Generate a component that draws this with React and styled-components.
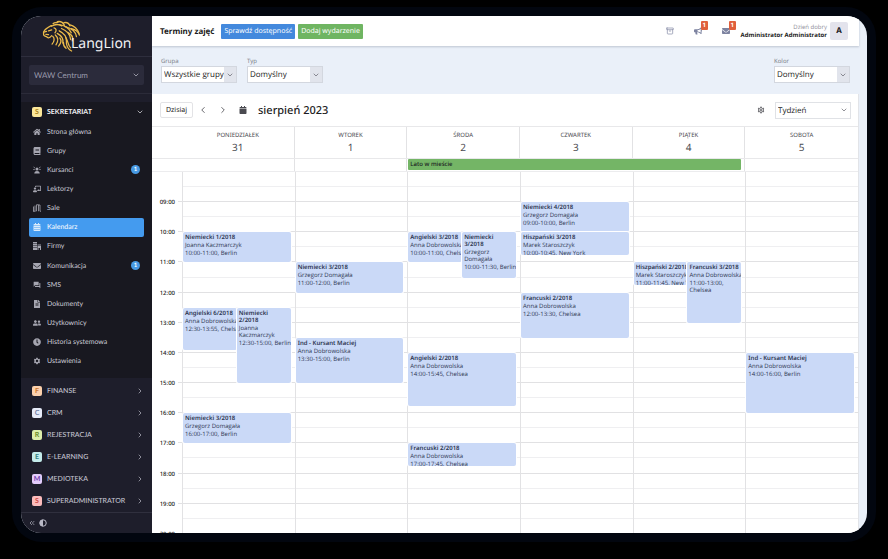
import React, { useState } from "react";
import styled, { createGlobalStyle, css } from "styled-components";
import {
  FaHome,
  FaBook,
  FaChalkboardTeacher,
  FaCalendarAlt,
  FaEnvelope,
  FaFileAlt,
  FaUserFriends,
  FaClock,
  FaBullhorn,
  FaCalendar,
} from "react-icons/fa";
import { MdForum, MdSettings, MdOutlineSettings } from "react-icons/md";
import { ImOffice } from "react-icons/im";
import {
  LuChevronDown,
  LuChevronLeft,
  LuChevronRight,
  LuChevronsLeft,
  LuArchive,
} from "react-icons/lu";

const DAY_START = 8 * 60;
const HALF_HOURS = 26;
const STEP = 5;

const menu = [
  { label: "Strona główna", icon: <FaHome /> },
  { label: "Grupy", icon: <FaBook /> },
  { label: "Kursanci", icon: <StudentIcon />, count: 1 },
  { label: "Lektorzy", icon: <FaChalkboardTeacher /> },
  { label: "Sale", icon: <RoomsIcon /> },
  { label: "Kalendarz", icon: <FaCalendarAlt /> },
  { label: "Firmy", icon: <ImOffice /> },
  { label: "Komunikacja", icon: <FaEnvelope />, count: 1 },
  { label: "SMS", icon: <MdForum /> },
  { label: "Dokumenty", icon: <FaFileAlt /> },
  { label: "Użytkownicy", icon: <FaUserFriends /> },
  { label: "Historia systemowa", icon: <FaClock /> },
  { label: "Ustawienia", icon: <MdSettings /> },
];

const sections = [
  { label: "FINANSE", bg: "#fbd0ac", color: "#c9752f" },
  { label: "CRM", bg: "#e6ebf8", color: "#7482a6" },
  { label: "REJESTRACJA", bg: "#dcedaa", color: "#6f8d2a" },
  { label: "E-LEARNING", bg: "#c3ebea", color: "#33807f" },
  { label: "MEDIOTEKA", bg: "#e3ccfa", color: "#7441ad" },
  { label: "SUPERADMINISTRATOR", bg: "#fbbcbc", color: "#cc4a4a" },
];

const days = [
  {
    name: "PONIEDZIAŁEK",
    number: 31,
    events: [
      { title: "Niemiecki 1/2018", person: "Joanna Kaczmarczyk", time: "10:00-11:00", place: "Berlin" },
      { title: "Angielski 6/2018", person: "Anna Dobrowolska", time: "12:30-13:55", place: "Chelsea", lane: 1 },
      { title: "Niemiecki 2/2018", person: "Joanna Kaczmarczyk", time: "12:30-15:00", place: "Berlin", lane: 2, wrapNames: true },
      { title: "Niemiecki 3/2018", person: "Grzegorz Domagała", time: "16:00-17:00", place: "Berlin" },
    ],
  },
  {
    name: "WTOREK",
    number: 1,
    events: [
      { title: "Niemiecki 3/2018", person: "Grzegorz Domagała", time: "11:00-12:00", place: "Berlin" },
      { title: "Ind - Kursant Maciej", person: "Anna Dobrowolska", time: "13:30-15:00", place: "Berlin" },
    ],
  },
  {
    name: "ŚRODA",
    number: 2,
    events: [
      { title: "Angielski 3/2018", person: "Anna Dobrowolska", time: "10:00-11:00", place: "Chelsea", lane: 1 },
      { title: "Niemiecki 3/2018", person: "Grzegorz Domagała", time: "10:00-11:30", place: "Berlin", lane: 2, wrapNames: true },
      { title: "Angielski 2/2018", person: "Anna Dobrowolska", time: "14:00-15:45", place: "Chelsea" },
      { title: "Francuski 2/2018", person: "Anna Dobrowolska", time: "17:00-17:45", place: "Chelsea" },
    ],
  },
  {
    name: "CZWARTEK",
    number: 3,
    events: [
      { title: "Niemiecki 4/2018", person: "Grzegorz Domagała", time: "09:00-10:00", place: "Berlin" },
      { title: "Hiszpański 3/2018", person: "Marek Staroszczyk", time: "10:00-10:45", place: "New York" },
      { title: "Francuski 2/2018", person: "Anna Dobrowolska", time: "12:00-13:30", place: "Chelsea" },
    ],
  },
  {
    name: "PIĄTEK",
    number: 4,
    events: [
      { title: "Hiszpański 2/2018", person: "Marek Staroszczyk", time: "11:00-11:45", place: "New York", lane: 1 },
      { title: "Francuski 3/2018", person: "Anna Dobrowolska", time: "11:00-13:00", place: "Chelsea", lane: 2, wrapTime: true },
    ],
  },
  {
    name: "SOBOTA",
    number: 5,
    events: [
      { title: "Ind - Kursant Maciej", person: "Anna Dobrowolska", time: "14:00-16:00", place: "Berlin" },
    ],
  },
];

const hours = Array.from({ length: 12 }, (_, i) => i + 9);

function toRow(clock) {
  const [h, m] = clock.split(":").map(Number);
  return (h * 60 + m - DAY_START) / STEP + 1;
}

export default function App() {
  const [active, setActive] = useState("Kalendarz");

  return (
    <Desk>
      <GlobalStyle />
      <Frame>
        <Screen>
          <Sidebar>
            <Brand href="#">
              <LionLogo />
              <BrandName>LangLion</BrandName>
            </Brand>
            <BranchBox>
              <SelectBox>
                <BranchSelect aria-label="Oddział">
                  <option>WAW Centrum</option>
                </BranchSelect>
                <SelectArrow $light>
                  <LuChevronDown />
                </SelectArrow>
              </SelectBox>
            </BranchBox>
            <OpenSection>
              <SectionButton $open>
                <Letter $bg="#fbe79a" $color="#a8821c">S</Letter>
                <SectionName>SEKRETARIAT</SectionName>
                <LuChevronDown />
              </SectionButton>
              <Menu>
                {menu.map(item => (
                  <MenuItem key={item.label}>
                    <MenuLink
                      href="#"
                      $active={item.label === active}
                      onClick={() => setActive(item.label)}
                    >
                      <MenuIcon>{item.icon}</MenuIcon>
                      <MenuText>{item.label}</MenuText>
                      {item.count && <Count>{item.count}</Count>}
                    </MenuLink>
                  </MenuItem>
                ))}
              </Menu>
            </OpenSection>
            <Sections>
              {sections.map(s => (
                <SectionButton key={s.label}>
                  <Letter $bg={s.bg} $color={s.color}>{s.label[0]}</Letter>
                  <SectionName>{s.label}</SectionName>
                  <LuChevronRight />
                </SectionButton>
              ))}
            </Sections>
            <SidebarFooter>
              <FooterButton aria-label="Zwiń menu">
                <LuChevronsLeft />
              </FooterButton>
              <FooterButton aria-label="Kontrast">
                <ContrastIcon />
              </FooterButton>
            </SidebarFooter>
          </Sidebar>

          <Main>
            <TopBar>
              <PageTitle>Terminy zajęć</PageTitle>
              <ActionButton $color="#4389dd">Sprawdź dostępność</ActionButton>
              <ActionButton $color="#6fb562">Dodaj wydarzenie</ActionButton>
              <Spacer />
              <TopIcons>
                <TopIcon aria-label="Archiwum">
                  <LuArchive />
                </TopIcon>
                <TopIcon aria-label="Ogłoszenia">
                  <FaBullhorn />
                  <Alert>1</Alert>
                </TopIcon>
                <TopIcon aria-label="Wiadomości">
                  <FaEnvelope />
                  <Alert>1</Alert>
                </TopIcon>
              </TopIcons>
              <User>
                <Greeting>Dzień dobry</Greeting>
                <UserName>Administrator Administrator</UserName>
              </User>
              <Avatar>A</Avatar>
            </TopBar>

            <Filters>
              <Filter label="Grupa" value="Wszystkie grupy" />
              <Filter label="Typ" value="Domyślny" />
              <Spacer />
              <Filter label="Kolor" value="Domyślny" />
            </Filters>

            <Calendar>
              <Toolbar>
                <TodayButton>Dzisiaj</TodayButton>
                <ToolButton aria-label="Poprzedni tydzień">
                  <LuChevronLeft />
                </ToolButton>
                <ToolButton aria-label="Następny tydzień">
                  <LuChevronRight />
                </ToolButton>
                <ToolButton aria-label="Wybierz datę" $small>
                  <FaCalendar />
                </ToolButton>
                <Month>sierpień 2023</Month>
                <Spacer />
                <ToolButton aria-label="Ustawienia kalendarza" $small>
                  <MdOutlineSettings />
                </ToolButton>
                <SelectBox>
                  <ViewSelect aria-label="Widok">
                    <option>Tydzień</option>
                  </ViewSelect>
                  <SelectArrow>
                    <LuChevronDown />
                  </SelectArrow>
                </SelectBox>
              </Toolbar>

              <WeekRow>
                <AxisCell />
                {days.map(day => (
                  <DayHead key={day.name}>
                    <DayName>{day.name}</DayName>
                    <DayNumber>{day.number}</DayNumber>
                  </DayHead>
                ))}
              </WeekRow>

              <AllDayRow>
                <AllDayCell $span={2} />
                <AllDayCell />
                <AllDayCell $span={3}>
                  <AllDayEvent>Lato w mieście</AllDayEvent>
                </AllDayCell>
                <AllDayCell />
              </AllDayRow>

              <Week>
                {Array.from({ length: HALF_HOURS }, (_, i) => (
                  <Slot key={i} $row={i + 1} />
                ))}
                {hours.map(h => (
                  <Hour key={h} $row={(h - 8) * 2}>
                    {String(h).padStart(2, "0")}:00
                  </Hour>
                ))}
                {days.map((day, i) => (
                  <Day key={day.name} $column={i + 2}>
                    {day.events.map(event => (
                      <CalendarEvent key={event.title + event.time} event={event} />
                    ))}
                  </Day>
                ))}
              </Week>
            </Calendar>
          </Main>
        </Screen>
      </Frame>
    </Desk>
  );
}

function Filter({ label, value }) {
  return (
    <FilterLabel>
      {label}
      <SelectBox>
        <FilterSelect>
          <option>{value}</option>
        </FilterSelect>
        <SelectArrow $filled>
          <LuChevronDown />
        </SelectArrow>
      </SelectBox>
    </FilterLabel>
  );
}

function CalendarEvent({ event }) {
  const [from, to] = event.time.split("-");

  return (
    <EventBox
      $from={toRow(from)}
      $to={toRow(to)}
      $lane={event.lane}
      $narrow={event.wrapNames}
    >
      <EventTitle $wrap={event.wrapNames}>{event.title}</EventTitle>
      <EventText $wrap={event.wrapNames}>{event.person}</EventText>
      <EventText $wrap={event.wrapTime}>
        {event.time}, {event.place}
      </EventText>
    </EventBox>
  );
}

function LionLogo() {
  return (
    <Lion viewBox="120 58 126 98" aria-hidden="true">
      <g fill="none" stroke="#e9b949" strokeWidth="4" strokeLinecap="round">
        <path d="M152 75C143 80 132 86 129 93C126 97 129 100 128 104C131 109 137 107 139 111C143 114 149 111 153 106" />
        <path d="M129 95L137 93M143 91L153 88M135 102L143 103" />
        <path d="M157 69C163 64 168 68 173 64M152 77C162 71 174 70 184 76" />
        <path d="M170 63C180 61 188 66 192 74M191 66C202 64 207 70 209 76" />
        <path d="M176 72C194 74 206 83 213 97M207 72C222 76 232 84 237 99" />
        <path d="M194 78C214 83 227 94 229 109M214 84C226 87 235 95 238 104" />
        <path d="M183 84C200 91 210 103 211 118M202 96C214 102 220 111 216 122" />
        <path d="M176 91C190 98 199 109 198 122C197 137 204 148 214 153" />
        <path d="M196 112C204 121 202 136 211 143M170 99C183 106 190 117 187 129" />
        <path d="M156 108C163 114 161 124 154 132M164 104C174 113 173 124 166 134" />
        <path d="M178 113C184 121 180 131 174 138M189 127C188 135 192 141 197 145" />
        <path d="M160 82C168 84 168 92 163 97" />
      </g>
    </Lion>
  );
}

function StudentIcon() {
  return (
    <svg viewBox="0 0 16 16" width="1em" height="1em" fill="currentColor">
      <circle cx="8" cy="6" r="3" />
      <path d="M2.5 15C3 11 5.200 9.800 8 9.800S13 11 13.500 15Z" />
      <path
        d="M1 2L4 4M15 2L12 4M.5 7H3.500M15.500 7H12.500"
        stroke="currentColor"
        strokeWidth="1.500"
      />
    </svg>
  );
}

function RoomsIcon() {
  return (
    <svg viewBox="0 0 16 16" width="1em" height="1em" fill="none" stroke="currentColor" strokeWidth="1.600">
      <path d="M1 14.500V5M4 14.500V3M7 14.500V1.500H11V14.500M11 2H14V14.500H16M0 14.500H5" />
    </svg>
  );
}

function ContrastIcon() {
  return (
    <svg viewBox="0 0 16 16" width="1em" height="1em">
      <circle cx="8" cy="8" r="6.500" fill="none" stroke="currentColor" strokeWidth="2" />
      <path d="M8 1.500A6.500 6.500 0 0 0 8 14.500Z" fill="currentColor" />
    </svg>
  );
}

const GlobalStyle = createGlobalStyle`
  * {
    box-sizing: border-box;
  }

  body {
    margin: 0;
    background: #000000;
    font-family: "Noto Sans", "Open Sans", sans-serif;
    color: #1c1c22;
    text-rendering: geometricPrecision;
  }

  button,
  select {
    margin: 0;
    padding: 0;
    border: none;
    background: none;
    color: inherit;
    font: inherit;
    text-rendering: inherit;
    cursor: pointer;
  }

  select {
    appearance: none;
  }

  svg {
    display: block;
    flex-shrink: 0;
  }
`;

const Desk = styled.div`
  height: 100vh;
  display: flex;
  padding: 7px 12px 17px;
`;

const Frame = styled.div`
  flex: 1;
  min-width: 0;
  display: flex;
  padding: 9px;
  border-radius: 30px;
  background: #02060f;
`;

const Screen = styled.div`
  flex: 1;
  min-width: 0;
  display: flex;
  overflow: hidden;
  border-radius: 20px;
  background: #eaf0f9;
`;

const Sidebar = styled.aside`
  width: 131px;
  flex-shrink: 0;
  display: flex;
  flex-direction: column;
  background: #1e1e2b;
  color: #c9c9d4;
  font-family: Lato, sans-serif;
`;

const Brand = styled.a`
  height: 41px;
  flex-shrink: 0;
  display: flex;
  align-items: flex-start;
  padding: 4px 0 0 20px;
  border-bottom: 1px solid #2e2e3d;
  color: #f2f2f5;
  text-decoration: none;
`;

const Lion = styled.svg`
  width: 41px;
  height: 32px;
`;

const BrandName = styled.span`
  margin: 14px 0 0 -11px;
  font-family: "Noto Sans", sans-serif;
  font-size: 14px;
  line-height: 20px;
`;

const BranchBox = styled.div`
  flex-shrink: 0;
  padding: 8px;
  border-bottom: 1px solid #2b2b39;
`;

const SelectBox = styled.span`
  display: grid;
  align-items: stretch;

  > * {
    grid-area: 1 / 1;
  }
`;

const BranchSelect = styled.select`
  width: 100%;
  height: 20px;
  padding: 0 5px;
  border-radius: 2px;
  background: #2b2b3b;
  color: #9a9aab;
  font-size: 8px;
`;

const SelectArrow = styled.span`
  width: 12px;
  margin: 1px;
  justify-self: end;
  display: flex;
  align-items: center;
  justify-content: center;
  color: #5a5a64;
  font-size: 8px;
  pointer-events: none;

  ${props =>
    props.$filled &&
    css`
      background: #e1e4ec;
    `}

  ${props =>
    props.$light &&
    css`
      width: 14px;
      color: #c9c9d4;
    `}
`;

const OpenSection = styled.div`
  flex-shrink: 0;
  margin-top: 8px;
  padding-bottom: 7px;
  background: #181820;
`;

const SectionButton = styled.button`
  width: 100%;
  height: ${props => (props.$open ? "20px" : "22px")};
  display: flex;
  align-items: center;
  gap: 5px;
  padding: 0 8px 0 11px;
  font-size: 7px;
  color: ${props => (props.$open ? "#f0f0f4" : "#c4c4d0")};
  font-weight: ${props => (props.$open ? 700 : 500)};
  text-align: left;

  svg {
    font-size: 8px;
  }
`;

const Letter = styled.span`
  width: 10px;
  height: 10px;
  display: flex;
  flex-shrink: 0;
  align-items: center;
  justify-content: center;
  border-radius: 2px;
  background: ${props => props.$bg};
  color: ${props => props.$color};
  font-size: 7px;
  font-weight: 700;
  line-height: 10px;
`;

const SectionName = styled.span`
  flex: 1;
`;

const Menu = styled.ul`
  height: 249px;
  display: grid;
  grid-auto-rows: 1fr;
  margin: 0;
  padding: 0 8px;
  list-style: none;
`;

const MenuItem = styled.li`
  display: flex;
`;

const MenuLink = styled.a`
  flex: 1;
  display: flex;
  align-items: center;
  padding: 0 4px;
  border-radius: 2px;
  background: ${props => (props.$active ? "#449bef" : "transparent")};
  color: ${props => (props.$active ? "#ffffff" : "#c9c9d4")};
  font-size: 7px;
  text-decoration: none;
`;

const MenuIcon = styled.span`
  width: 14px;
  font-size: 8px;
  opacity: 0.8;
`;

const MenuText = styled.span`
  flex: 1;
`;

const Count = styled.span`
  width: 9px;
  height: 9px;
  border-radius: 50%;
  background: #4799e3;
  color: #ffffff;
  font-size: 6px;
  font-weight: 700;
  line-height: 9px;
  text-align: center;
`;

const Sections = styled.div`
  flex-shrink: 0;
  padding-top: 2px;
`;

const SidebarFooter = styled.div`
  flex: 1;
  display: flex;
  align-items: center;
  gap: 3px;
  padding: 0 7px;
  border-top: 1px solid #30303e;
`;

const FooterButton = styled.button`
  color: #b9b9c6;
  font-size: 8px;
`;

const Main = styled.main`
  flex: 1;
  min-width: 0;
  display: flex;
  flex-direction: column;
  padding-right: 8px;
`;

const Spacer = styled.div`
  flex: 1;
`;

const TopBar = styled.header`
  height: 30px;
  flex-shrink: 0;
  display: flex;
  align-items: center;
  gap: 3px;
  padding: 0 11px 0 8px;
  background: #ffffff;
  box-shadow: 0 1px 2px rgba(60, 70, 90, 0.25);
`;

const PageTitle = styled.h1`
  margin: 0 4px 0 0;
  font-size: 8px;
  font-weight: 700;
`;

const ActionButton = styled.button`
  height: 15px;
  padding: 0 3px;
  border-radius: 1px;
  background: ${props => props.$color};
  color: #ffffff;
  font-size: 7px;
`;

const TopIcons = styled.div`
  display: flex;
  gap: 20px;
  margin-right: 8px;
`;

const TopIcon = styled.button`
  position: relative;
  color: #7d83a0;
  font-size: 8px;
`;

const Alert = styled.span`
  position: absolute;
  top: -6px;
  left: 7px;
  width: 7px;
  height: 9px;
  border-radius: 1px;
  background: #e0603c;
  color: #ffffff;
  font-size: 6px;
  font-weight: 700;
  line-height: 9px;
`;

const User = styled.div`
  display: flex;
  flex-direction: column;
  align-items: flex-end;
  font-family: "Open Sans", sans-serif;
  font-size: 6px;
  line-height: 8px;
`;

const Greeting = styled.span`
  color: #8d8d98;
`;

const UserName = styled.strong`
  font-weight: 700;
`;

const Avatar = styled.span`
  width: 18px;
  height: 18px;
  border-radius: 2px;
  background: #e3e3ec;
  font-size: 8px;
  font-weight: 700;
  line-height: 18px;
  text-align: center;
`;

const Filters = styled.div`
  height: 48px;
  flex-shrink: 0;
  display: flex;
  align-items: flex-start;
  gap: 10px;
  padding: 10px 9px 0;
`;

const FilterLabel = styled.label`
  width: 76px;
  color: #7c7f88;
  font-size: 6px;
  line-height: 10px;
`;

const FilterSelect = styled.select`
  width: 100%;
  height: 17px;
  padding: 0 2px;
  border: 1px solid #d3d7df;
  background: #ffffff;
  color: #1c1c22;
  font-family: "Open Sans", sans-serif;
  font-size: 8px;
`;

const Calendar = styled.section`
  flex: 1;
  min-height: 0;
  overflow: hidden;
  border-right: 1px solid #e2e4e8;
  background: #ffffff;
`;

const Toolbar = styled.div`
  height: 32px;
  display: flex;
  align-items: center;
  padding: 0 7px 0 8px;
`;

const TodayButton = styled.button`
  width: 33px;
  height: 16px;
  border: 1px solid #e3e3e6;
  border-radius: 2px;
  font-size: 7px;
`;

const ToolButton = styled.button`
  width: 20px;
  display: flex;
  justify-content: center;
  color: #4a4a50;
  font-size: ${props => (props.$small ? "8px" : "10px")};
`;

const Month = styled.h2`
  margin: 0 0 0 5px;
  font-size: 11px;
  font-weight: 500;
`;

const ViewSelect = styled.select`
  width: 76px;
  height: 17px;
  margin-left: 4px;
  padding: 0 2px;
  border: 1px solid #e0e2e6;
  font-family: "Open Sans", sans-serif;
  font-size: 8px;
`;

const weekColumns = css`
  display: grid;
  grid-template-columns: 30px repeat(6, minmax(0, 1fr));
`;

const WeekRow = styled.div`
  ${weekColumns}
  height: 33px;
  border-top: 1px solid #e8e8ea;
  border-bottom: 1px solid #e8e8ea;
`;

const AxisCell = styled.div``;

const DayHead = styled.div`
  display: flex;
  flex-direction: column;
  align-items: center;
  padding-top: 3px;
  border-right: 1px solid #e2e2e4;
  color: #4c4c52;

  &:last-child {
    border-right: none;
  }
`;

const DayName = styled.span`
  font-size: 6px;
  line-height: 10px;
`;

const DayNumber = styled.span`
  font-size: 10px;
  line-height: 15px;
`;

const AllDayRow = styled.div`
  ${weekColumns}
  height: 13px;
  border-bottom: 1px solid #ececee;
`;

const AllDayCell = styled.div`
  grid-column: span ${props => props.$span || 1};
  padding: 0 3px 0 1px;
  border-right: 1px solid #e2e2e4;

  &:last-child {
    border-right: none;
  }
`;

const AllDayEvent = styled.div`
  height: 11px;
  padding: 0 2px;
  border-radius: 1px;
  background: #74b566;
  font-size: 6px;
  font-weight: 500;
  line-height: 11px;
`;

const Week = styled.div`
  ${weekColumns}
  height: 392px;
  grid-template-rows: repeat(${HALF_HOURS}, minmax(0, 1fr));
`;

const Slot = styled.div`
  grid-column: 1 / -1;
  grid-row: ${props => props.$row};
  margin-left: ${props => (props.$row % 2 ? "30px" : "26px")};
  border-bottom: 1px solid ${props => (props.$row % 2 ? "#efeff1" : "#e1e1e3")};
`;

const Hour = styled.time`
  grid-column: 1;
  grid-row: ${props => props.$row} / span 2;
  align-self: center;
  padding-right: 7px;
  font-size: 6px;
  font-weight: 500;
  line-height: 8px;
  text-align: right;
`;

const Day = styled.div`
  grid-column: ${props => props.$column};
  grid-row: 1 / -1;
  display: grid;
  grid-template-columns: repeat(2, minmax(0, 1fr));
  grid-template-rows: repeat(${(HALF_HOURS * 30) / STEP}, minmax(0, 1fr));
  padding-right: 4px;
  border-left: 1px solid #e2e2e4;
`;

const EventBox = styled.article`
  grid-row: ${props => props.$from} / ${props => props.$to};
  grid-column: ${props => (props.$lane ? `${props.$lane} / span 1` : "1 / -1")};
  overflow: hidden;
  padding: 2px ${props => (props.$narrow ? "4px" : "0")} 0 2px;
  border-radius: 2px;
  background: #cad9f7;
  box-shadow: 0 0 0 1px #ffffff;
  color: #2c3550;
`;

const EventTitle = styled.h3`
  margin: 0 0 1px;
  font-size: 6px;
  font-weight: 600;
  line-height: 7px;
  white-space: ${props => (props.$wrap ? "normal" : "nowrap")};
`;

const EventText = styled.p`
  margin: 0 0 1px;
  font-family: "Open Sans", sans-serif;
  font-size: 6px;
  line-height: 7px;
  white-space: ${props => (props.$wrap ? "normal" : "nowrap")};
`;
